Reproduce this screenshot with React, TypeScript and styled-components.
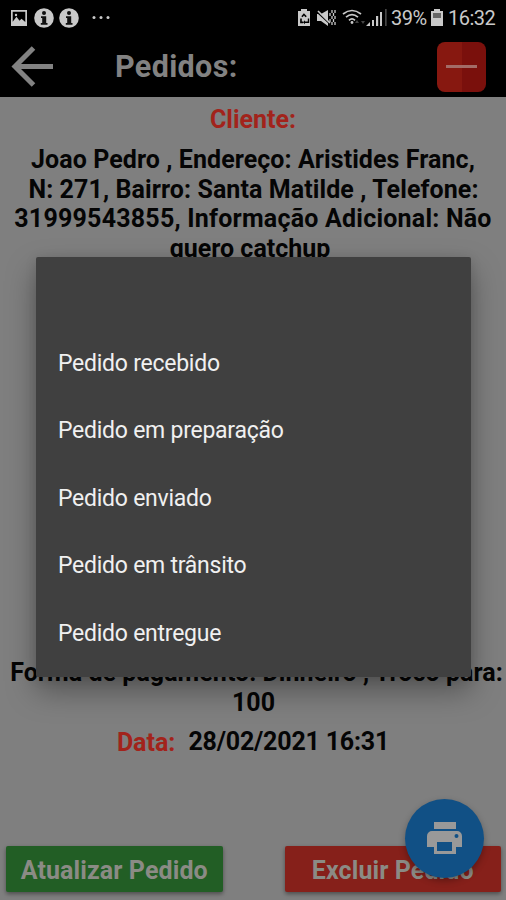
import React from "react";
import styled, { createGlobalStyle } from "styled-components";

const GlobalStyle = createGlobalStyle`
  * { box-sizing: border-box; }
  body { margin: 0; background: #7f7f7f; }
`;

const Screen = styled.main`
  position: relative;
  display: flex;
  flex-direction: column;
  width: 506px;
  height: 900px;
  overflow: hidden;
  background: #7f7f7f;
  font-family: Roboto, "Liberation Sans", sans-serif;
  white-space: nowrap;
`;

const StatusBar = styled.header`
  display: flex;
  align-items: center;
  justify-content: space-between;
  height: 36px;
  padding: 0 11px 0 10px;
  background: #000;
  color: #c9c9c9;
`;

const StatusSide = styled.div`
  display: flex;
  align-items: center;
`;

const Glyph = styled.svg`
  display: block;
  flex: none;
`;

const StatusText = styled.span<{ $width: number }>`
  width: ${(p) => p.$width}px;
  font-size: 20px;
  line-height: 36px;
  letter-spacing: -0.5px;
`;

const AppBar = styled.nav`
  display: flex;
  align-items: center;
  height: 61px;
  padding: 0 20px 0 11px;
  background: #000;
`;

const Title = styled.h1`
  flex: 1;
  margin: 1px 0 0 61px;
  color: #828282;
  font-size: 30.5px;
  font-weight: 700;
  line-height: 36px;
  letter-spacing: 0.35px;
`;

const RemoveButton = styled.button`
  display: grid;
  place-items: center;
  width: 49px;
  height: 50px;
  padding: 0;
  border: 0;
  border-radius: 8px;
  background: linear-gradient(90deg, #871810 0 51%, #7a100c 51%);
`;

const Dash = styled.span`
  width: 31px;
  height: 3px;
  background: #a36c67;
`;

const Content = styled.section`
  display: flex;
  flex: 1;
  flex-direction: column;
  align-items: center;
  padding-top: 8px;
`;

const Label = styled.span`
  color: #a2231b;
  font-size: 25px;
  font-weight: 700;
  line-height: 30px;
`;

const Lines = styled.p<{ $top: number }>`
  display: flex;
  flex-direction: column;
  align-items: center;
  margin: ${(p) => p.$top}px 0 0;
  color: #050505;
  font-size: 25px;
  font-weight: 700;
`;

const Line = styled.span<{ $spacing?: number; $shift?: number }>`
  margin-left: ${(p) => p.$shift ?? 0}px;
  line-height: 29.5px;
  letter-spacing: ${(p) => p.$spacing ?? 0}px;
`;

const DateRow = styled.div`
  display: flex;
  gap: 13px;
  margin-top: 11px;
`;

const DateValue = styled.span`
  color: #050505;
  font-size: 25px;
  font-weight: 700;
  line-height: 27px;
  letter-spacing: -0.2px;
`;

const Actions = styled.footer`
  display: flex;
  justify-content: space-between;
  padding: 0 5px 8px 6px;
`;

const ActionButton = styled.button<{ $color: string }>`
  width: 216.5px;
  height: 46px;
  padding: 2px 0 0;
  border: 0;
  border-radius: 2px;
  background: ${(p) => p.$color};
  box-shadow: 0 2px 4px rgba(0, 0, 0, 0.4);
  color: #8b8b85;
  font: 700 25px Roboto, sans-serif;
  letter-spacing: 0.1px;
`;

const PrintButton = styled.button`
  position: absolute;
  left: 405px;
  top: 799px;
  display: grid;
  place-items: center;
  width: 79px;
  height: 79px;
  padding: 0;
  border: 0;
  border-radius: 50%;
  background: #115085;
  box-shadow: 0 3px 7px rgba(0, 0, 0, 0.3);
`;

const Dialog = styled.ul`
  position: absolute;
  left: 36px;
  top: 257px;
  width: 435px;
  height: 420px;
  margin: 0;
  padding: 72.5px 22px 0;
  border-radius: 2px;
  background: #404040;
  box-shadow: 0 14px 30px rgba(0, 0, 0, 0.34), 0 2px 12px rgba(0, 0, 0, 0.12);
  list-style: none;
`;

const Option = styled.li`
  height: 67.5px;
  color: #f0f0f0;
  font-size: 23px;
  line-height: 67.5px;
  letter-spacing: -0.25px;
`;

const InfoIcon = () => (
  <Glyph width="20" height="20" viewBox="0 0 20 20">
    <circle cx="10" cy="10" r="9.8" fill="#c9c9c9" />
    <circle cx="10" cy="5" r="2" fill="#111" />
    <path d="M7 8.2h5.2V15h1.3v1.7H6.8V15h1.4V9.9H7z" fill="#111" />
  </Glyph>
);

const orderStates = [
  "Pedido recebido",
  "Pedido em preparação",
  "Pedido enviado",
  "Pedido em trânsito",
  "Pedido entregue",
];

export default function App() {
  return (
    <Screen>
      <GlobalStyle />
      <StatusBar>
        <StatusSide>
          <Glyph width="24" height="20" viewBox="0 0 24 20">
            <path fillRule="evenodd" fill="#c9c9c9" d="M1 2h16v16H1zM2.7 3.7v10l3.8-5 3 4 2-2 3.8 3.4V3.7z" />
            <circle cx="6" cy="7" r="1.2" fill="#c9c9c9" />
          </Glyph>
          <InfoIcon />
          <Glyph width="5" height="20" />
          <InfoIcon />
          <Glyph width="32" height="20" viewBox="0 0 32 20" fill="#c9c9c9">
            <circle cx="15" cy="9.5" r="1.5" />
            <circle cx="22" cy="9.5" r="1.5" />
            <circle cx="29" cy="9.5" r="1.5" />
          </Glyph>
        </StatusSide>
        <StatusSide>
          <Glyph width="94" height="20" viewBox="0 0 94 20" fill="#c9c9c9">
            <path fillRule="evenodd" d="M4 1h6v2h3v15H1V3h3zM6.9 5.3l-2.6 3 1.3 1L7 7.6l1.5 1.7 1.3-1zM3.2 10.5l-.1 4.7h3v-1.7H4.8v-3zm7.6 0v3H8v-1.2l-2 2 2 2v-1.2h4.2v-4.6z" />
            <path d="M20 6h4l7-4v16l-7-5h-4z" />
            <path d="m20 4 13 12" stroke="#000" strokeWidth="1.4" />
            <path d="m21 3 12 12" stroke="#c9c9c9" strokeWidth="1.6" />
            <path d="M35 2v3M33 5v3M35 8v3M33 11v3M35 14v3M38 2v3M36.5 5v3M38 8v3M36.5 11v3M38 14v3" stroke="#c9c9c9" strokeWidth="1.3" />
            <g fill="none" stroke="#c9c9c9" strokeWidth="1.7">
              <path d="M46 6q9-7 18 0M49 9.2q6-5 12 0M52 12.3q3-3 6 0" />
            </g>
            <circle cx="55" cy="14.5" r="1.4" />
            <path d="m60 12 2 3h-4zm4 1h4l-2 3z" fill="#444" />
            <path d="M69 18h4v-4zM75 12h2v6h-2zM79 8h2.2v10H79zM83 4h2v14h-2z" />
            <path d="M88 1h1.7v17H88z" fill="#444" />
          </Glyph>
          <StatusText $width={39}>39%</StatusText>
          <Glyph width="18" height="20" viewBox="0 0 18 20" fill="#c9c9c9">
            <path d="M4 1h6v2h3v15H1V3h3z" />
            <path d="M3 5h8v5H3z" fill="#666" />
          </Glyph>
          <StatusText $width={47}>16:32</StatusText>
        </StatusSide>
      </StatusBar>
      <AppBar>
        <Glyph width="43" height="42" viewBox="0 0 43 42">
          <path d="M42 20.5H4M22.5 2 4 20.5 22.5 39" fill="none" stroke="#828282" strokeWidth="5" />
        </Glyph>
        <Title>Pedidos:</Title>
        <RemoveButton aria-label="Remover">
          <Dash />
        </RemoveButton>
      </AppBar>
      <Content>
        <Label>Cliente:</Label>
        <Lines $top={10}>
          <Line $spacing={0.07}>Joao Pedro , Endereço: Aristides Franc,</Line>
          <Line $spacing={0.09} $shift={1}>N: 271, Bairro: Santa Matilde , Telefone:</Line>
          <Line $spacing={0.22}>31999543855, Informação Adicional: Não</Line>
          <Line $shift={-6}>quero catchup</Line>
        </Lines>
        <Lines $top={395}>
          <Line $spacing={0.04} $shift={7}>Forma de pagamento: Dinheiro , Troco para:</Line>
          <Line $shift={1}>100</Line>
        </Lines>
        <DateRow>
          <Label>Data:</Label>
          <DateValue>28/02/2021 16:31</DateValue>
        </DateRow>
      </Content>
      <Actions>
        <ActionButton $color="#225e25">Atualizar Pedido</ActionButton>
        <ActionButton $color="#86201a">Excluir Pedido</ActionButton>
      </Actions>
      <PrintButton aria-label="Imprimir">
        <Glyph width="35" height="33" viewBox="0 0 35 33">
          <path fillRule="evenodd" fill="#999" d="M7 0h22v7H7zM5 9h25a5 5 0 0 1 5 5v11h-6v7H7v-7H0V14a5 5 0 0 1 5-5zm5 11v9h15v-9zm19.5-8a2 2 0 1 0 0 4 2 2 0 0 0 0-4z" />
        </Glyph>
      </PrintButton>
      <Dialog>
        {orderStates.map((state) => (
          <Option key={state}>{state}</Option>
        ))}
      </Dialog>
    </Screen>
  );
}
